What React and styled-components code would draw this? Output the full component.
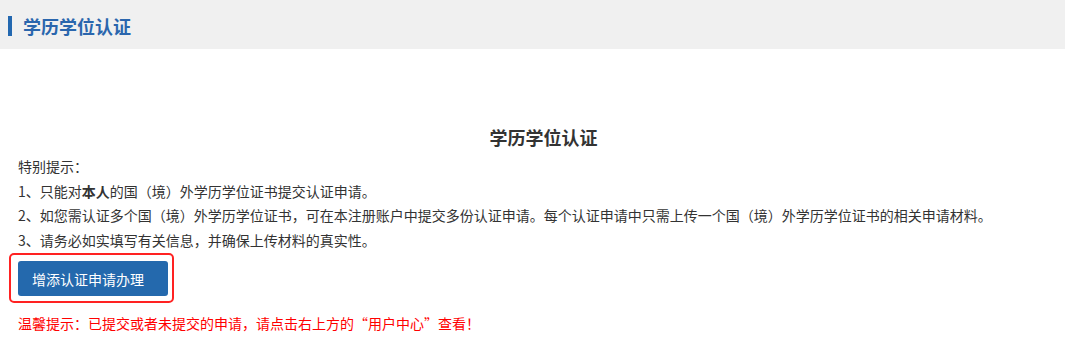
import React from "react";
import styled, { createGlobalStyle } from "styled-components";

const Global = createGlobalStyle`
  html, body { margin: 0; padding: 0; background: #fff; }
  body { font-family: "Microsoft YaHei", "Noto Sans CJK SC", "Noto Sans", sans-serif; color: #333; }
`;

const Header = styled.div`
  height: 49px;
  box-sizing: border-box;
  padding: 3px 0 0 8px;
  background: #f0f0f0;
  display: flex;
  align-items: center;
  gap: 11px;
`;

const Bar = styled.span`
  width: 4px;
  height: 20px;
  background: #2368b0;
`;

const HeaderTitle = styled.h2`
  margin: 0;
  font-size: 18px;
  font-weight: bold;
  color: #2a66ad;
  line-height: 24px;
`;

const Content = styled.div`
  padding: 0 0 0 18px;
`;

const Title = styled.h3`
  margin: 74px 0 0;
  padding-left: 4px;
  text-align: center;
  font-size: 18px;
  line-height: 28px;
  font-weight: bold;
  color: #333;
`;

const Notes = styled.div`
  margin-top: 3px;
  font-size: 14px;
  line-height: 24.5px;
  color: #333;
`;

const Line = styled.p`
  margin: 0;
`;

const Strong = styled.b`
  font-weight: bold;
`;

const Highlight = styled.div`
  display: inline-flex;
  margin: 1px 0 0 -9px;
  padding: 6px 4px 5px 7px;
  border: 2px solid #ff2222;
  border-radius: 5px;
`;

const Button = styled.button`
  width: 150px;
  height: 35px;
  padding: 0 0 0 14px;
  text-align: left;
  border: none;
  border-radius: 3px;
  background: #2469ad;
  color: #fff;
  font-family: inherit;
  font-size: 14px;
  cursor: pointer;
`;

const Tip = styled.p`
  margin: 10px 0 0;
  font-size: 14px;
  line-height: 20px;
  color: #ff0000;
`;

export default function App() {
  return (
    <>
      <Global />
      <Header>
        <Bar />
        <HeaderTitle>学历学位认证</HeaderTitle>
      </Header>
      <Content>
        <Title>学历学位认证</Title>
        <Notes>
          <Line>特别提示：</Line>
          <Line>
            1、只能对<Strong>本人</Strong>的国（境）外学历学位证书提交认证申请。
          </Line>
          <Line>
            2、如您需认证多个国（境）外学历学位证书，可在本注册账户中提交多份认证申请。每个认证申请中只需上传一个国（境）外学历学位证书的相关申请材料。
          </Line>
          <Line>3、请务必如实填写有关信息，并确保上传材料的真实性。</Line>
        </Notes>
        <Highlight>
          <Button>增添认证申请办理</Button>
        </Highlight>
        <Tip>温馨提示：已提交或者未提交的申请，请点击右上方的“用户中心”查看！</Tip>
      </Content>
    </>
  );
}
